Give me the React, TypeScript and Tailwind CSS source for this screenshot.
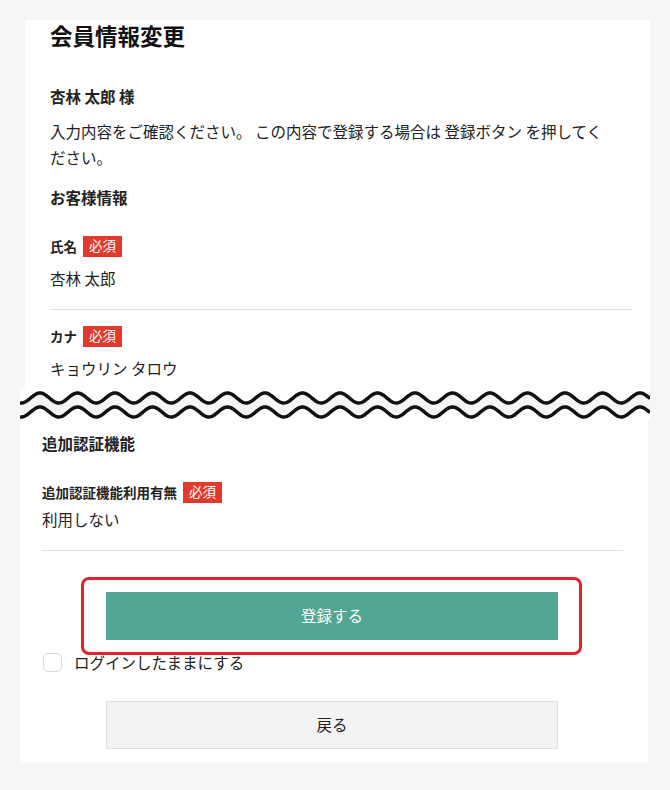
import React from "react";

function wavePath(cy: number, amp: number, period: number, width: number, phase: number) {
  const pts: string[] = [];
  for (let x = 0; x <= width; x += 1) {
    const y = cy - amp * Math.cos((2 * Math.PI * (x - phase)) / period);
    pts.push(`${x === 0 ? "M" : "L"}${x},${y.toFixed(2)}`);
  }
  return pts.join(" ");
}

function Wave() {
  const W = 630;
  const P = 37.5;
  const ph = 20;
  const top = wavePath(10, 5, P, W, ph);
  const bot = wavePath(24, 5, P, W, ph);
  const band: string[] = [];
  for (let x = 0; x <= W; x += 1) {
    const y = 10 - 5 * Math.cos((2 * Math.PI * (x - ph)) / P);
    band.push(`${x === 0 ? "M" : "L"}${x},${y.toFixed(2)}`);
  }
  for (let x = W; x >= 0; x -= 1) {
    const y = 24 - 5 * Math.cos((2 * Math.PI * (x - ph)) / P);
    band.push(`L${x},${y.toFixed(2)}`);
  }
  band.push("Z");
  return (
    <svg width={W} height={32} viewBox={`0 0 ${W} 32`} className="block">
      <rect x="0" y="0" width={W} height="32" fill="#ffffff" />
      <path d={band.join(" ")} fill="#f5f5f5" />
      <path d={top} fill="none" stroke="#111" strokeWidth="3.5" />
      <path d={bot} fill="none" stroke="#111" strokeWidth="3.5" />
    </svg>
  );
}

function Badge() {
  return (
    <span className="ml-[6px] inline-flex h-[21px] items-center bg-[#e13a2c] px-[6px] text-[13.5px] font-normal leading-none text-white">
      必須
    </span>
  );
}

export default function App() {
  return (
    <div
      className="min-h-[790px] w-[670px] bg-[#f6f6f6] pt-[20px] text-[#222]"
      style={{ fontFamily: '"Noto Sans CJK JP", "Noto Sans", sans-serif' }}
    >
      {/* top panel */}
      <div className="ml-[25px] flex h-[368px] w-[625px] flex-col bg-white pl-[25px] pr-[18px]">
        <h1 className="text-[22.5px] font-bold leading-[30px] text-[#111]">会員情報変更</h1>
        <p className="mt-[34px] text-[15.5px] font-bold leading-[24px]">杏林 太郎 様</p>
        <p className="mt-[10px] w-[566px] text-[15.5px] leading-[26px]">
          入力内容をご確認ください。 この内容で登録する場合は 登録ボタン を押してください。
        </p>
        <p className="mt-[15px] text-[15.5px] font-bold leading-[24px]">お客様情報</p>
        <div className="mt-[27px] flex h-[20px] items-center text-[13.5px] font-bold">
          氏名
          <Badge />
        </div>
        <p className="mt-[10px] text-[15.5px] leading-[24px]">杏林 太郎</p>
        <div className="mt-[19px] h-px w-[582px] bg-[#e2e2e2]" />
        <div className="mt-[16px] flex h-[20px] items-center text-[13.5px] font-bold">
          カナ
          <Badge />
        </div>
        <p className="mt-[10px] text-[15.5px] leading-[24px]">キョウリン タロウ</p>
      </div>

      {/* wave divider */}
      <div className="ml-[20px] w-[630px]">
        <Wave />
      </div>

      {/* bottom panel */}
      <div className="ml-[20px] flex w-[628px] flex-col bg-white pb-[14px] pl-[22px] pr-[25px] pt-[11px]">
        <p className="text-[15.5px] font-bold leading-[24px]">追加認証機能</p>
        <div className="mt-[27px] flex h-[20px] items-center text-[13.5px] font-bold">
          追加認証機能利用有無
          <Badge />
        </div>
        <p className="mt-[5px] text-[15.5px] leading-[24px]">利用しない</p>
        <div className="mt-[19px] h-px w-[581px] bg-[#e2e2e2]" />

        <div className="relative ml-[64px] mt-[41px] w-[452px]">
          <button className="flex h-[48px] w-[452px] items-center justify-center bg-[#52a694] text-[15.5px] text-white">
            登録する
          </button>
          <div className="pointer-events-none absolute left-[-25px] right-[-24px] top-[-15px] bottom-[-15px] rounded-[8px] border-[3px] border-[#e3232b]" />
        </div>

        <label className="mt-[13px] flex h-[18px] items-center">
          <span className="ml-px block h-[19px] w-[19px] rounded-[5px] border border-[#d8d8d8] bg-white" />
          <span className="ml-[12px] text-[15.5px] leading-[24px]">ログインしたままにする</span>
        </label>

        <button className="ml-[64px] mt-[30px] flex h-[48px] w-[452px] items-center justify-center border border-[#dddddd] bg-[#f3f3f3] text-[15.5px] text-[#222]">
          戻る
        </button>
      </div>
    </div>
  );
}
